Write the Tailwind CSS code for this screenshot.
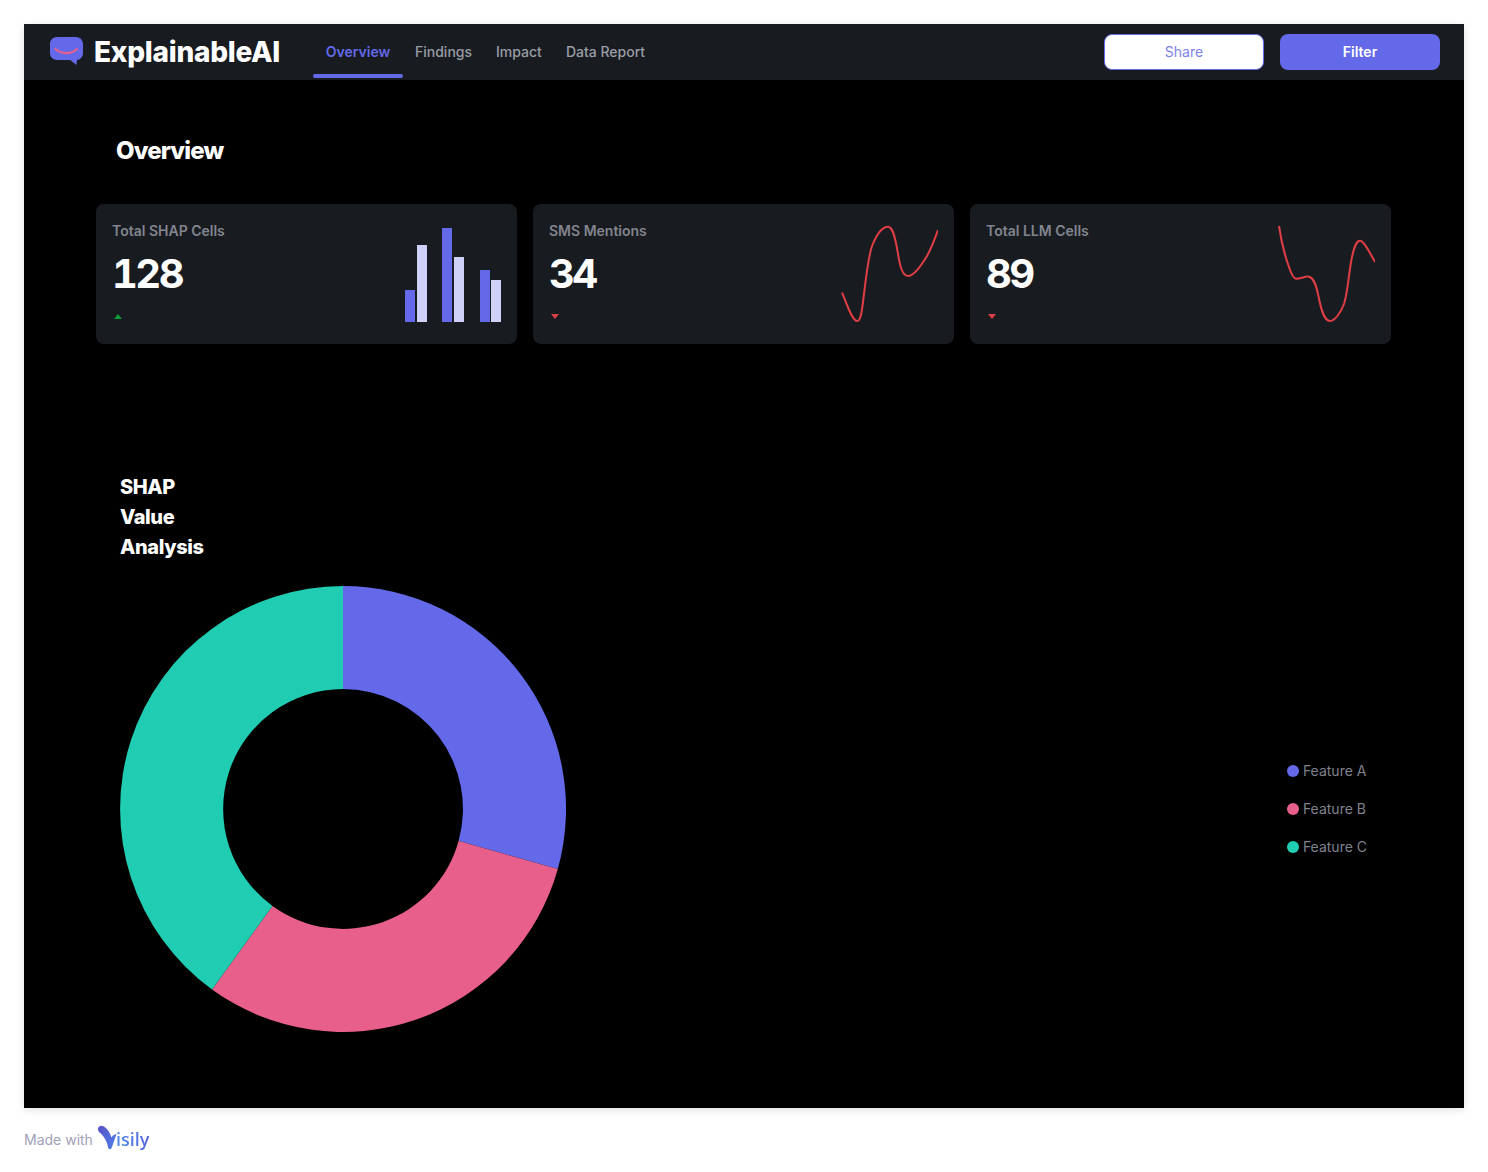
<!DOCTYPE html>
<html lang="en">

<head>
    <meta charset="UTF-8">
    <meta name="viewport" content="width=device-width, initial-scale=1.0">
    <title>ExplainableAI</title>
    <script src="https://cdn.jsdelivr.net/npm/@tailwindcss/browser@4"></script>
</head>

<body class="bg-white font-['Inter',sans-serif]">
    <div class="px-6 pt-6">
        <div class="bg-black shadow-[0_2px_8px_rgba(0,0,0,0.12)]">
            <!-- Header -->
            <header class="h-14 bg-[#181b20] flex justify-between pl-[25px] pr-6">
                <div class="flex">
                    <svg class="mt-[12px]" width="35" height="30" viewBox="0 0 35 30">
                        <path d="M8 1 H27 C31 1 34 4 34 8 V17 C34 21 31 24 28 24 L27.5 29 L21 24 H8 C4 24 1 21 1 17 V8 C1 4 4 1 8 1 Z" fill="#6369e8" />
                        <path d="M6.500 13 C13 18.500 22 18.500 28 13" fill="none" stroke="#e95f8b" stroke-width="2.200" stroke-linecap="round" />
                    </svg>
                    <div class="ml-[10px] w-[219px] h-14 flex items-center text-[28px] font-extrabold text-white tracking-[-0.25px]">ExplainableAI</div>
                    <nav class="flex text-sm font-medium text-[#9a9da6]">
                        <a class="w-[90px] h-[54px] flex flex-col text-[#6369e8] font-semibold">
                            <span class="flex-1 flex items-center justify-center pt-[6px]">Overview</span>
                            <span class="h-1 rounded-full bg-[#6369e8]"></span>
                        </a>
                        <a class="px-3 pt-[6px] h-[54px] pb-1 flex items-center">Findings</a>
                        <a class="px-3 pt-[6px] h-[54px] pb-1 flex items-center">Impact</a>
                        <a class="px-3 pt-[6px] h-[54px] pb-1 flex items-center">Data Report</a>
                    </nav>
                </div>
                <div class="flex items-center gap-4">
                    <button class="w-40 h-9 rounded-lg bg-white border border-[#6369e8] text-sm text-[#7c81ec]">Share</button>
                    <button class="w-40 h-9 rounded-lg bg-[#6369e8] text-sm font-semibold text-white">Filter</button>
                </div>
            </header>

            <main class="pb-[76px]">
                <h1 class="pt-[55px] pl-[92px] text-2xl font-extrabold tracking-[-0.85px] text-white">Overview</h1>

                <!-- Stat cards -->
                <div class="mt-[37px] ml-[72px] w-[1295px] grid grid-cols-3 gap-4">
                    <div class="h-[140px] rounded-lg bg-[#181b20] flex justify-between pl-4 pr-4">
                        <div>
                            <div class="mt-[17px] text-sm leading-5 font-semibold text-[#82858f]">Total SHAP Cells</div>
                            <div class="mt-[7px] text-[40px] leading-[52px] font-bold tabular-nums tracking-[-2.5px] text-white">128</div>
                            <div class="mt-[14px] ml-[2px] w-0 h-0 border-x-4 border-x-transparent border-b-[5px] border-b-[#0f9b3a]"></div>
                        </div>
                        <svg class="mt-[22px]" width="96" height="96" viewBox="405 226 96 96">
                            <rect x="405" y="290" width="10" height="32" fill="#6369e8" />
                            <rect x="417" y="245" width="10" height="77" fill="#d0d1f8" />
                            <rect x="442" y="228" width="10" height="94" fill="#6369e8" />
                            <rect x="454" y="257" width="10" height="65" fill="#d0d1f8" />
                            <rect x="480" y="270" width="10" height="52" fill="#6369e8" />
                            <rect x="491" y="280" width="10" height="42" fill="#d0d1f8" />
                        </svg>
                    </div>

                    <div class="h-[140px] rounded-lg bg-[#181b20] flex justify-between pl-4 pr-4">
                        <div>
                            <div class="mt-[17px] text-sm leading-5 font-semibold text-[#82858f]">SMS Mentions</div>
                            <div class="mt-[7px] text-[40px] leading-[52px] font-bold tabular-nums tracking-[-2.5px] text-white">34</div>
                            <div class="mt-[14px] ml-[2px] w-0 h-0 border-x-4 border-x-transparent border-t-[5px] border-t-[#e03e45]"></div>
                        </div>
                        <svg class="mt-[20px]" width="98" height="100" viewBox="840 224 98 100">
                            <path d="M842 292.700 C847 304 852 321 857.300 321 C861 321 862 310 863.500 298 C866 278 868 258 872 246 C876 236 882 226.700 888 226.700 C893 226.700 895 238 897 248 C899 260 901 276 908 276 C914 276 921 266 927 256 C932 247 935 238 938 230" fill="none" stroke="#e03e45" stroke-width="2" />
                        </svg>
                    </div>

                    <div class="h-[140px] rounded-lg bg-[#181b20] flex justify-between pl-4 pr-4">
                        <div>
                            <div class="mt-[17px] text-sm leading-5 font-semibold text-[#82858f]">Total LLM Cells</div>
                            <div class="mt-[7px] text-[40px] leading-[52px] font-bold tabular-nums tracking-[-2.5px] text-white">89</div>
                            <div class="mt-[14px] ml-[2px] w-0 h-0 border-x-4 border-x-transparent border-t-[5px] border-t-[#e03e45]"></div>
                        </div>
                        <svg class="mt-[20px]" width="98" height="100" viewBox="1277 224 98 100">
                            <path d="M1279 226 C1281 240 1285 256 1289 267 C1291 273 1293 278.500 1296 278.700 C1300 279 1305 276 1309 276.700 C1314 278 1316 285 1318 294 C1320 304 1323 321 1330 321 C1335 321 1341 312 1344 304 C1348 292 1349 270 1352 257 C1354 248 1356 240.700 1360 240.700 C1364 240.700 1370 253 1375 262" fill="none" stroke="#e03e45" stroke-width="2" />
                        </svg>
                    </div>
                </div>

                <!-- Donut chart -->
                <h2 class="mt-[128px] ml-24 w-[100px] text-xl leading-[30px] font-extrabold tracking-[-0.4px] text-white">SHAP Value Analysis</h2>
                <div class="mt-6 pl-24 pr-[97px] flex items-center justify-between">
                    <svg width="446" height="446" viewBox="120 586 446 446">
                        <path d="M343 586 A223 223 0 0 1 557.800 869 L458.600 841 A120 120 0 0 0 343 689 Z" fill="#6369e8" />
                        <path d="M557.800 869 A223 223 0 0 1 212 989.400 L272.500 906 A120 120 0 0 0 458.600 841 Z" fill="#e95f8b" />
                        <path d="M212 989.400 A223 223 0 0 1 343 586 L343 689 A120 120 0 0 0 272.500 906 Z" fill="#20ccb2" />
                    </svg>
                    <div class="flex flex-col gap-4 text-sm leading-[22px] text-[#7f828c]">
                        <div class="flex items-center gap-1"><span class="size-3 rounded-full bg-[#6369e8]"></span>Feature A</div>
                        <div class="flex items-center gap-1"><span class="size-3 rounded-full bg-[#e95f8b]"></span>Feature B</div>
                        <div class="flex items-center gap-1"><span class="size-3 rounded-full bg-[#20ccb2]"></span>Feature C</div>
                    </div>
                </div>
            </main>
        </div>

        <!-- Footer -->
        <footer class="mt-[17px] flex items-center h-[30px]">
            <span class="text-sm text-[#a3a1b8]">Made with</span>
            <svg class="ml-[4px] -mt-[4px]" width="24" height="26" viewBox="0 0 24 26">
                <defs>
                    <linearGradient id="visily-v" x1="0" y1="0" x2="1" y2="1">
                        <stop offset="0" stop-color="#5a51c8" />
                        <stop offset="1" stop-color="#4f7fe6" />
                    </linearGradient>
                </defs>
                <path d="M1 4.500 C0.500 1.500 4 -0.500 7 1.500 C11 4 13 8 14.500 12.500 C15.500 10.500 17 9.500 19.500 9 L15 22 C14 25 11.500 25 11 22 C10 16 6 10 2.500 7.500 C1.500 6.500 1 5.500 1 4.500 Z" fill="url(#visily-v)" />
            </svg>
            <span class="-ml-[5px] -mt-[1px] bg-linear-to-r from-[#4f8ae8] to-[#5566dc] bg-clip-text text-transparent text-[18px] font-semibold font-['Open_Sans',sans-serif]">isily</span>
        </footer>
    </div>
</body>

</html>
